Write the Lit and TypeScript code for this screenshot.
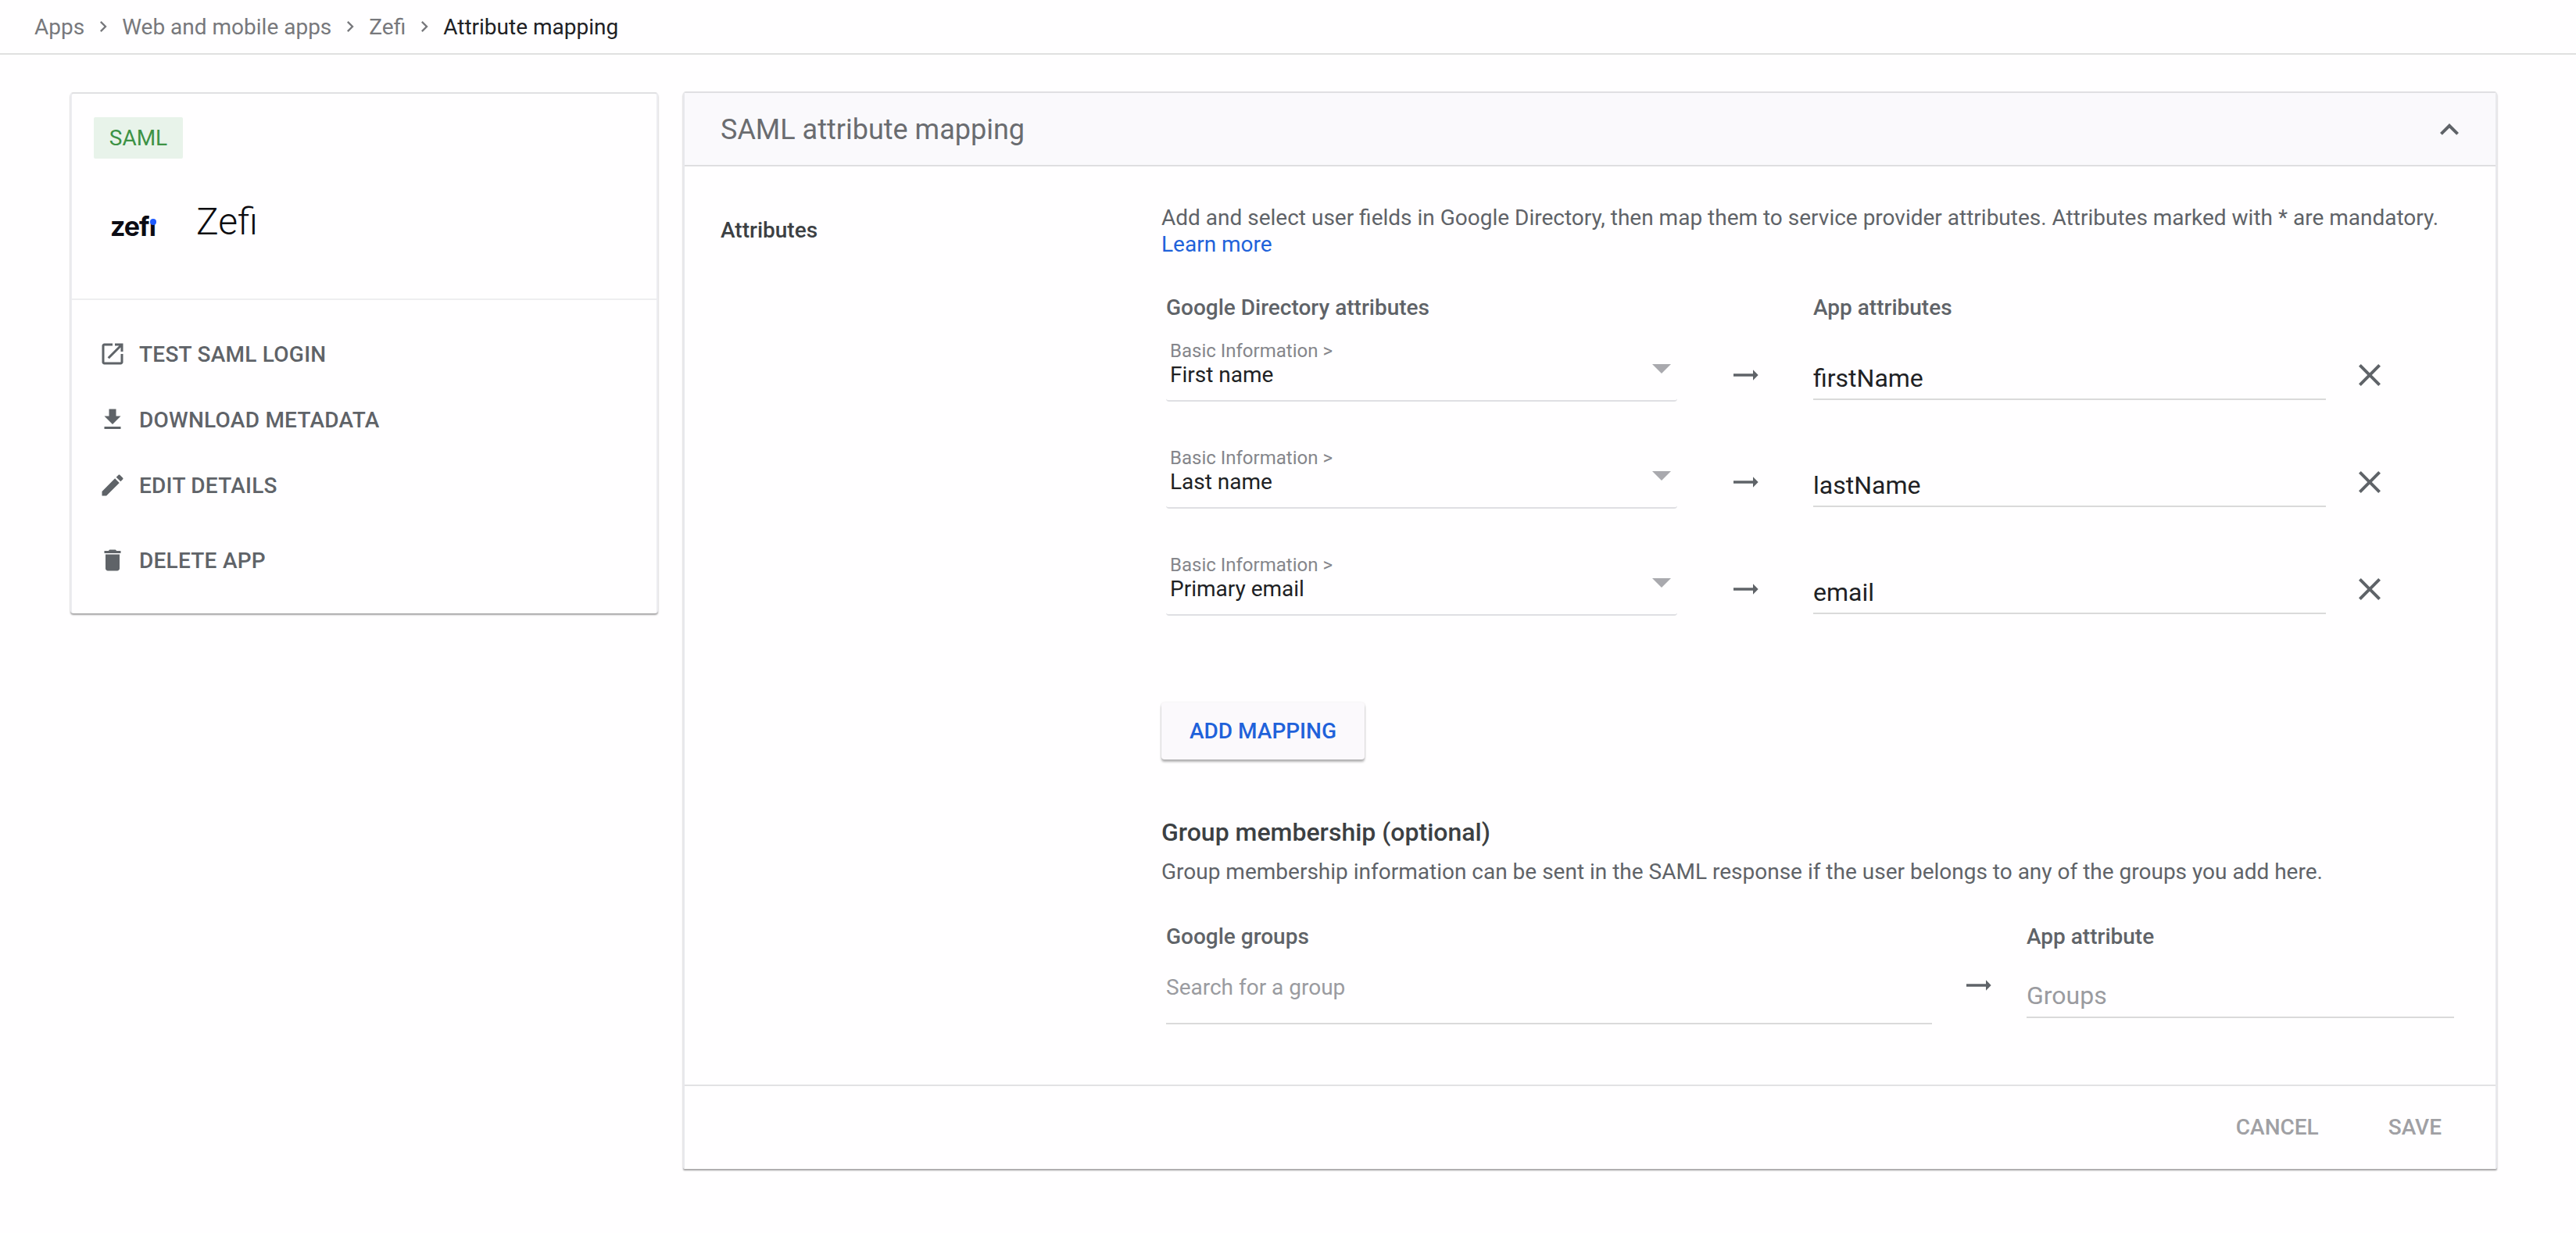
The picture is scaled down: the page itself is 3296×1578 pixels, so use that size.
import { LitElement, html, css, svg } from "lit";
import { customElement } from "lit/decorators.js";

const P = {
  open: "M19 19H5V5h7V3H5c-1.11 0-2 .9-2 2v14c0 1.1.89 2 2 2h14c1.1 0 2-.9 2-2v-7h-2v7zM14 3v2h3.59l-9.83 9.83 1.41 1.41L19 6.41V10h2V3h-7z",
  download: "M19 9h-4V3H9v6H5l7 7 7-7zM5 18v2h14v-2H5z",
  edit: "M3 17.25V21h3.75L17.81 9.94l-3.75-3.75L3 17.25zM20.71 7.04c.39-.39.39-1.02 0-1.41l-2.34-2.34c-.39-.39-1.02-.39-1.41 0l-1.83 1.83 3.75 3.75 1.83-1.83z",
  del: "M6 19c0 1.1.9 2 2 2h8c1.1 0 2-.9 2-2V7H6v12zM19 4h-3.5l-1-1h-5l-1 1H5v2h14V4z",
  up: "M12 8l-6 6 1.41 1.41L12 10.83l4.59 4.58L18 14z",
  close: "M19 6.41L17.59 5 12 10.59 6.41 5 5 6.41 10.59 12 5 17.59 6.41 19 12 13.41 17.59 19 19 17.59 13.41 12z",
  arrow: "M22 12l-4-4v3H3v2h15v3z",
  right: "M10 6L8.59 7.41 13.17 12l-4.58 4.59L10 18l6-6z",
};

const icon = (d: string, cls: string) =>
  html`<svg class=${cls} viewBox="0 0 24 24" fill="currentColor">${svg`<path d=${d}></path>`}</svg>`;

@customElement("app-root")
export class AppRoot extends LitElement {
  static styles = css`
    :host { display: block; width: 3296px; height: 1578px; overflow: hidden; background: #fffeff; font-family: Roboto, "Liberation Sans", sans-serif; font-size: 28px; color: #5f6368; }
    * { box-sizing: border-box; }
    svg { display: block; flex: none; }
    .top { height: 70px; border-bottom: 2px solid #e0e0e0; display: flex; align-items: center; padding-left: 44px; gap: 10px; color: #77787c; }
    .top .cr { width: 28px; height: 28px; color: #77787c; }
    .top .cur { color: #202124; }
    .content { display: flex; align-items: flex-start; gap: 32px; padding: 47px 0 0 90px; }
    .card { width: 752px; height: 667px; margin-top: 1px; background: #fffeff; border: 2px solid #ececf0; border-top-color: #e0e0e2; border-bottom: 0; border-radius: 4px; box-shadow: 0 2px 2px rgba(0,0,0,.36); }
    .head { padding: 30px 28px 63px; border-bottom: 2px solid #eeeef0; }
    .tag { display: inline-block; width: 114px; height: 53px; line-height: 53px; text-align: center; background: #e8f3ea; color: #3d9245; border-radius: 2px; font-size: 28px; vertical-align: top; }
    .brand { display: flex; align-items: center; margin-top: 44px; height: 72px; padding-left: 21px; }
    .logo { position: relative; width: 59px; height: 36px; margin-top: 13px; font-family: Inter, sans-serif; font-weight: 700; font-size: 34px; line-height: 36px; letter-spacing: -1px; color: #0c0c14; margin-right: 51px; }
    .dot { position: absolute; left: 51px; top: 8px; width: 8px; height: 8px; border-radius: 50%; background: #1f5bff; box-shadow: 0 -6px 0 1px #fffeff; }
    .name { font-size: 48px; font-weight: 300; line-height: 72px; margin-top: 2px; color: #0c0c10; }
    .actions { padding: 27px 0 0 34px; }
    .act { display: flex; align-items: center; gap: 16px; height: 84px; font-weight: 500; font-size: 28px; letter-spacing: .25px; }
    .act.last { margin-top: 12px; }
    .i36 { width: 36px; height: 36px; }
    .panel { width: 2321px; height: 1379px; background: #fffeff; border: 2px solid #e8e8ec; border-top-color: #e0e0e2; border-bottom: 0; border-radius: 4px 4px 2px 2px; box-shadow: 0 2px 2px rgba(0,0,0,.36); }
    .ph { height: 94px; background: #faf9fc; border-bottom: 2px solid #dedee0; display: flex; align-items: center; justify-content: space-between; padding: 2px 35px 0 46px; font-size: 36px; color: #6a6c70; }
    .i48 { width: 48px; height: 48px; color: #5f6368; }
    .pb { display: flex; height: 1177px; border-bottom: 2px solid #e2e2e4; }
    .lab { width: 610px; padding: 65px 0 0 46px; font-weight: 500; line-height: 34px; color: #3c4043; }
    .main { flex: 1; padding-top: 49px; }
    .desc { line-height: 34px; }
    .link { color: #1f62da; }
    .hd { font-weight: 500; font-size: 28px; line-height: 34px; }
    .heads { display: grid; grid-template-columns: 828px 656px; margin: 47px 0 22px 6px; }
    .rows { display: grid; grid-template-columns: 654px 174px 656px auto; row-gap: 56px; margin-left: 6px; }
    .sel { height: 81px; display: flex; padding: 0 8px 0 5px; border-bottom: 2px solid #dfdfe3; border-radius: 0 0 4px 4px; }
    .st { flex: 1; }
    .cap { font-size: 24px; line-height: 32px; color: #85868b; }
    .val { line-height: 30px; color: #202124; }
    .tri { width: 0; height: 0; margin-top: 33px; border-left: 12px solid transparent; border-right: 12px solid transparent; border-top: 12px solid #a9a9ae; }
    .arr { width: 40px; height: 40px; margin: 27px 0 0 67px; color: #5f6368; }
    .inp { height: 48px; margin-top: 31px; line-height: 40px; font-size: 32px; color: #202124; border-bottom: 2px solid #dadada; }
    .x { margin: 23px 0 0 32px; }
    .btn { width: 260px; height: 73px; margin-top: 111px; background: #fbf9fc; border-radius: 4px; box-shadow: 0 3px 3px rgba(0,0,0,.3), 0 0 3px rgba(0,0,0,.08); display: flex; align-items: center; justify-content: center; font-weight: 500; font-size: 28px; color: #1f62da; }
    .gt { margin-top: 73px; font-size: 32px; line-height: 40px; font-weight: 500; color: #3c4043; }
    .gd { margin-top: 14px; line-height: 34px; }
    .gh { display: grid; grid-template-columns: 980px 121px 547px; margin: 49px 0 0 6px; }
    .search { margin-top: 31px; height: 64px; line-height: 34px; color: #9a9ba0; border-bottom: 2px solid #dadada; }
    .gh .arr { margin: 25px 0 0 39px; }
    .grp { margin-top: 39px; height: 48px; line-height: 38px; font-size: 32px; color: #9a9ba0; border-bottom: 2px solid #dadada; }
    .foot { height: 106px; display: flex; align-items: center; justify-content: flex-end; gap: 89px; padding: 0 69px 2px 0; font-weight: 500; font-size: 28px; color: #a0a0a4; }
  `;

  private row(name: string, attr: string) {
    return html`
      <div class="sel">
        <div class="st"><div class="cap">Basic Information &gt;</div><div class="val">${name}</div></div>
        <div class="tri"></div>
      </div>
      ${icon(P.arrow, "arr")}
      <div class="inp">${attr}</div>
      ${icon(P.close, "i48 x")}
    `;
  }

  render() {
    return html`
      <div class="top">
        <span>Apps</span>${icon(P.right, "cr")}
        <span>Web and mobile apps</span>${icon(P.right, "cr")}
        <span>Zefi</span>${icon(P.right, "cr")}
        <span class="cur">Attribute mapping</span>
      </div>
      <div class="content">
        <div class="card">
          <div class="head">
            <span class="tag">SAML</span>
            <div class="brand">
              <div class="logo">zefi<span class="dot"></span></div>
              <div class="name">Zefi</div>
            </div>
          </div>
          <div class="actions">
            <div class="act">${icon(P.open, "i36")}<span>TEST SAML LOGIN</span></div>
            <div class="act">${icon(P.download, "i36")}<span>DOWNLOAD METADATA</span></div>
            <div class="act">${icon(P.edit, "i36")}<span>EDIT DETAILS</span></div>
            <div class="act last">${icon(P.del, "i36")}<span>DELETE APP</span></div>
          </div>
        </div>
        <div class="panel">
          <div class="ph"><span>SAML attribute mapping</span>${icon(P.up, "i48")}</div>
          <div class="pb">
            <div class="lab">Attributes</div>
            <div class="main">
              <div class="desc">Add and select user fields in Google Directory, then map them to service provider attributes. Attributes marked with * are mandatory.<br><span class="link">Learn more</span></div>
              <div class="heads">
                <div class="hd">Google Directory attributes</div>
                <div class="hd">App attributes</div>
              </div>
              <div class="rows">
                ${this.row("First name", "firstName")}
                ${this.row("Last name", "lastName")}
                ${this.row("Primary email", "email")}
              </div>
              <div class="btn">ADD MAPPING</div>
              <div class="gt">Group membership (optional)</div>
              <div class="gd">Group membership information can be sent in the SAML response if the user belongs to any of the groups you add here.</div>
              <div class="gh">
                <div class="hd">Google groups</div><div></div><div class="hd">App attribute</div>
                <div class="search">Search for a group</div>
                ${icon(P.arrow, "arr")}
                <div class="grp">Groups</div>
              </div>
            </div>
          </div>
          <div class="foot"><span>CANCEL</span><span>SAVE</span></div>
        </div>
      </div>
    `;
  }
}
